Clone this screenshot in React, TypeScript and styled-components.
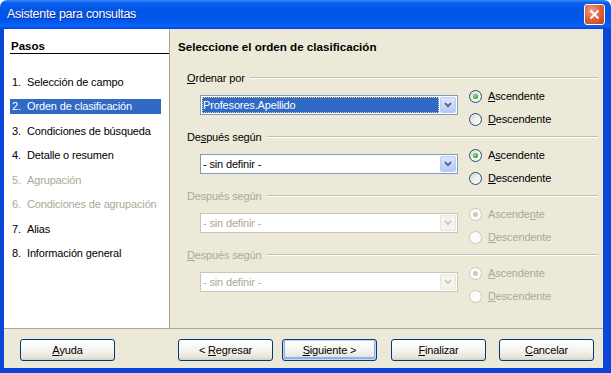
import styled, { createGlobalStyle, css } from 'styled-components'

const GlobalStyle = createGlobalStyle`
  html, body {
    margin: 0;
    padding: 0;
    background: #ffffff;
  }
`

const DISABLED = '#aca899'
const TAN = '#ece9d8'

const steps = [
  { n: '1.', label: 'Selección de campo' },
  { n: '2.', label: 'Orden de clasificación', active: true },
  { n: '3.', label: 'Condiciones de búsqueda' },
  { n: '4.', label: 'Detalle o resumen' },
  { n: '5.', label: 'Agrupación', disabled: true },
  { n: '6.', label: 'Condiciones de agrupación', disabled: true },
  { n: '7.', label: 'Alias' },
  { n: '8.', label: 'Información general' },
]

const Window = styled.div`
  width: 611px;
  height: 373px;
  display: flex;
  flex-direction: column;
  font-family: 'Liberation Sans', Arial, sans-serif;
  font-size: 11px;
  letter-spacing: -0.15px;
  color: #000;
`

const TitleBar = styled.div`
  height: 29px;
  flex-shrink: 0;
  display: flex;
  align-items: center;
  justify-content: space-between;
  padding: 0 6px 0 7px;
  border-radius: 7px 7px 0 0;
  background: linear-gradient(
    180deg,
    #3b8cf7 0%,
    #0a5ef0 10%,
    #0054e3 40%,
    #0058ee 75%,
    #0a63f6 90%,
    #0342d3 100%
  );
`

const Title = styled.span`
  color: #fff;
  font-size: 12.5px;
  letter-spacing: -0.3px;
  text-shadow: 1px 1px 0 #0a2a9a;
  margin-top: -1px;
`

const CloseButton = styled.div`
  width: 21px;
  height: 21px;
  box-sizing: border-box;
  border: 1px solid #fff;
  border-radius: 3px;
  background: radial-gradient(circle at 35% 30%, #f0a58a 0%, #e2643c 45%, #c63d14 100%);
  display: flex;
  align-items: center;
  justify-content: center;
`

const Frame = styled.div`
  flex: 1;
  display: flex;
  flex-direction: column;
  background: ${TAN};
  border-style: solid;
  border-color: #0a47d8;
  border-width: 0 8px 5px 4px;
`

const Main = styled.div`
  height: 299px;
  display: flex;
`

const Sidebar = styled.div`
  width: 165px;
  background: #fff;
  border-right: 1px solid #a9a79a;
  padding-top: 11px;
`

const SideHeader = styled.div`
  margin-left: 6px;
  padding-left: 1px;
  line-height: 13px;
  font-size: 11.5px;
  letter-spacing: 0;
  font-weight: bold;
  border-bottom: 1px solid #000;
`

const StepList = styled.div`
  margin-top: 20px;
  display: flex;
  flex-direction: column;
  gap: 9.5px;
`

const Step = styled.div<{ $active?: boolean; $disabled?: boolean }>`
  margin-left: 6px;
  width: 151px;
  height: 15px;
  padding-left: 2px;
  box-sizing: border-box;
  display: flex;
  align-items: center;
  white-space: nowrap;
  color: ${p => (p.$disabled ? DISABLED : '#000')};
  ${p =>
    p.$active &&
    css`
      background: #316ac5;
      color: #fff;
    `}
`

const StepNum = styled.span`
  width: 15px;
  flex-shrink: 0;
`

const Content = styled.div`
  flex: 1;
  padding: 11px 5px 0 8px;
  display: flex;
  flex-direction: column;
`

const Heading = styled.div`
  line-height: 14px;
  font-size: 11.6px;
  letter-spacing: 0;
  font-weight: bold;
  margin-bottom: 17px;
`

const Section = styled.div`
  margin-bottom: 4px;
`

const SectionLabel = styled.div<{ $disabled?: boolean }>`
  display: flex;
  align-items: center;
  height: 14px;
  margin-left: 9px;
  color: ${p => (p.$disabled ? DISABLED : '#000')};
  white-space: nowrap;
`

const FixedLine = styled.div`
  flex: 1;
  margin-left: 5px;
  border-top: 1px solid #c3c0b1;
  border-bottom: 1px solid #fff;
`

const SectionBody = styled.div`
  display: flex;
  align-items: flex-start;
  margin-top: 4px;
  padding-left: 22px;
`

const Combo = styled.div<{ $disabled?: boolean }>`
  width: 258px;
  height: 20px;
  margin-top: 6px;
  box-sizing: border-box;
  border: 1px solid ${p => (p.$disabled ? '#c9c7ba' : '#7f9db9')};
  background: #fff;
  display: flex;
  align-items: stretch;
  padding: 1px;
`

const ComboField = styled.div<{ $selected?: boolean; $disabled?: boolean }>`
  flex: 1;
  display: flex;
  align-items: center;
  padding-left: 1px;
  margin-right: 1px;
  color: ${p => (p.$disabled ? DISABLED : '#000')};
  ${p =>
    p.$selected &&
    css`
      background: #316ac5;
      color: #fff;
      outline: 1px dotted #d8c98a;
      outline-offset: -1px;
    `}
`

const ComboButton = styled.div<{ $disabled?: boolean }>`
  width: 16px;
  box-sizing: border-box;
  border-radius: 2px;
  display: flex;
  align-items: center;
  justify-content: center;
  ${p =>
    p.$disabled
      ? css`
          border: 1px solid #e8e6dc;
          background: #f4f3ee;
        `
      : css`
          border: 1px solid #b9cdf7;
          background: linear-gradient(180deg, #dbe6fd 0%, #c3d5fc 60%, #b5c9f8 100%);
        `}
`

const RadioGroup = styled.div`
  display: flex;
  flex-direction: column;
  gap: 9px;
  margin-left: 11px;
`

const RadioRow = styled.div<{ $disabled?: boolean }>`
  display: flex;
  align-items: center;
  height: 14px;
  gap: 6px;
  color: ${p => (p.$disabled ? DISABLED : '#000')};
`

const RadioCircle = styled.span<{ $checked?: boolean; $disabled?: boolean }>`
  width: 13px;
  height: 13px;
  box-sizing: border-box;
  border-radius: 50%;
  border: 1px solid ${p => (p.$disabled ? '#cac8bb' : '#1c5180')};
  background: ${p =>
    p.$disabled ? '#fbfbf9' : 'linear-gradient(135deg, #dcd9cd 0%, #f4f3ee 60%, #ffffff 100%)'};
  display: flex;
  align-items: center;
  justify-content: center;
  &::after {
    content: '';
    display: ${p => (p.$checked ? 'block' : 'none')};
    width: 5px;
    height: 5px;
    border-radius: 50%;
    background: ${p =>
      p.$disabled ? '#cac8bb' : 'radial-gradient(circle at 40% 40%, #9ee29e 0%, #21a121 70%)'};
  }
`

const Footer = styled.div`
  flex: 1;
  border-top: 1px solid #aca899;
  display: flex;
  align-items: flex-start;
  padding: 10px 0 0 16px;
`

const Button = styled.div<{ $default?: boolean; $ml?: number }>`
  width: 95px;
  height: 22px;
  box-sizing: border-box;
  margin-left: ${p => p.$ml || 0}px;
  border: 1px solid #003c74;
  border-radius: 3px;
  background: linear-gradient(180deg, #ffffff 0%, #f4f3ee 55%, #e6e3d6 88%, #d6d0c5 100%);
  display: flex;
  align-items: center;
  justify-content: center;
  white-space: pre;
  ${p =>
    p.$default &&
    css`
      box-shadow: inset 0 0 0 1px #c4d7fb, inset 0 -1px 0 2px #8fb0ef;
    `}
`

const U = styled.span`
  text-decoration: underline;
  text-underline-offset: 1px;
`

const Chevron = ({ disabled }: { disabled?: boolean }) => (
  <svg width="8" height="6" viewBox="0 0 8 6">
    <path
      d="M1 1.2 L4 4.2 L7 1.2"
      fill="none"
      stroke={disabled ? '#c9c7ba' : '#4d6185'}
      strokeWidth="1.8"
    />
  </svg>
)

type Mn = [string, string, string]

type SortSectionProps = {
  label: Mn
  value: string
  asc: Mn
  desc: Mn
  focused?: boolean
  disabled?: boolean
}

const Label = ({ parts }: { parts: Mn }) => (
  <span>
    {parts[0]}
    <U>{parts[1]}</U>
    {parts[2]}
  </span>
)

const SortSection = ({ label, value, asc, desc, focused, disabled }: SortSectionProps) => (
  <Section>
    <SectionLabel $disabled={disabled}>
      <Label parts={label} />
      <FixedLine />
    </SectionLabel>
    <SectionBody>
      <Combo $disabled={disabled}>
        <ComboField $selected={focused} $disabled={disabled}>
          {value}
        </ComboField>
        <ComboButton $disabled={disabled}>
          <Chevron disabled={disabled} />
        </ComboButton>
      </Combo>
      <RadioGroup>
        <RadioRow $disabled={disabled}>
          <RadioCircle $checked $disabled={disabled} />
          <Label parts={asc} />
        </RadioRow>
        <RadioRow $disabled={disabled}>
          <RadioCircle $disabled={disabled} />
          <Label parts={desc} />
        </RadioRow>
      </RadioGroup>
    </SectionBody>
  </Section>
)

const App = () => {
  return (
    <>
      <GlobalStyle />
      <Window>
        <TitleBar>
          <Title>Asistente para consultas</Title>
          <CloseButton>
            <svg width="11" height="11" viewBox="0 0 11 11">
              <path d="M1.5 1.5 L9.5 9.5 M9.5 1.5 L1.5 9.5" stroke="#fff" strokeWidth="2" />
            </svg>
          </CloseButton>
        </TitleBar>
        <Frame>
          <Main>
            <Sidebar>
              <SideHeader>Pasos</SideHeader>
              <StepList>
                {steps.map(s => (
                  <Step key={s.n} $active={s.active} $disabled={s.disabled}>
                    <StepNum>{s.n}</StepNum>
                    {s.label}
                  </Step>
                ))}
              </StepList>
            </Sidebar>
            <Content>
              <Heading>Seleccione el orden de clasificación</Heading>
              <SortSection
                label={['', 'O', 'rdenar por']}
                value="Profesores.Apellido"
                asc={['', 'A', 'scendente']}
                desc={['', 'D', 'escendente']}
                focused
              />
              <SortSection
                label={['De', 's', 'pués según']}
                value="- sin definir -"
                asc={['A', 's', 'cendente']}
                desc={['', 'D', 'escendente']}
              />
              <SortSection
                label={['Después se', 'g', 'ún']}
                value="- sin definir -"
                asc={['Ascende', 'n', 'te']}
                desc={['', 'D', 'escendente']}
                disabled
              />
              <SortSection
                label={['', 'D', 'espués según']}
                value="- sin definir -"
                asc={['', 'A', 'scendente']}
                desc={['', 'D', 'escendente']}
                disabled
              />
            </Content>
          </Main>
          <Footer>
            <Button>
              <U>A</U>yuda
            </Button>
            <Button $ml={63}>
              {'< '}
              <U>R</U>egresar
            </Button>
            <Button $ml={9} $default>
              <U>S</U>
              {'iguiente >'}
            </Button>
            <Button $ml={14}>
              <U>F</U>inalizar
            </Button>
            <Button $ml={13}>
              <U>C</U>ancelar
            </Button>
          </Footer>
        </Frame>
      </Window>
    </>
  )
}

export default App
